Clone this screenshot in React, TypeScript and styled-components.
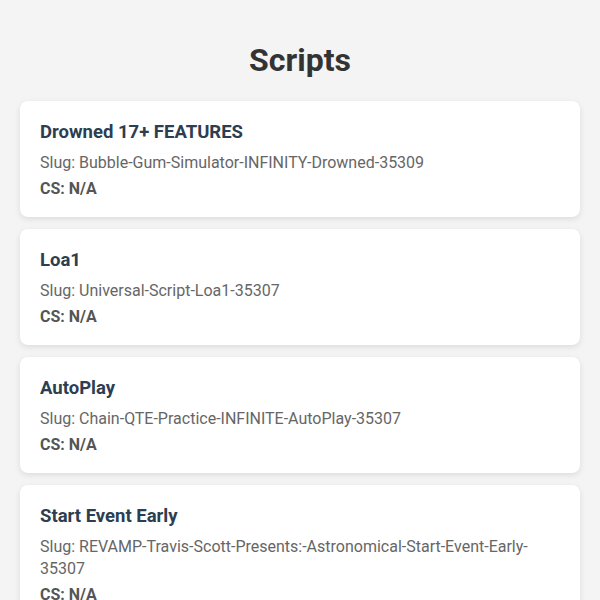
import React from 'react';
import styled, { createGlobalStyle } from 'styled-components';

const GlobalStyle = createGlobalStyle`
  body {
    margin: 0;
    background: #f4f4f4;
    font-family: Roboto, "Liberation Sans", Arial, sans-serif;
  }
`;

const Page = styled.div`
  padding: 20px;
`;

const Heading = styled.h1`
  text-align: center;
  color: #333;
  font-size: 32px;
  font-weight: 700;
  line-height: 38px;
  margin: 21px 0 22px;
`;

const List = styled.div`
  display: flex;
  flex-direction: column;
  gap: 12px;
`;

const Card = styled.div`
  background: white;
  border-radius: 8px;
  padding: 19px 20px 17px;
  box-shadow: 0 2px 6px rgba(0, 0, 0, 0.1);
`;

const CardTitle = styled.h3`
  margin: 0 0 8px;
  font-size: 18.5px;
  line-height: 24px;
  font-weight: 700;
  color: #2c3e50;
`;

const Meta = styled.p<{ $bold?: boolean }>`
  margin: 0 0 4px;
  font-size: 16px;
  line-height: 22px;
  color: ${p => (p.$bold ? '#555' : '#666')};
  font-weight: ${p => (p.$bold ? 700 : 400)};

  &:last-child {
    margin-bottom: 0;
  }
`;

const scripts = [
  { title: 'Drowned 17+ FEATURES', slug: 'Bubble-Gum-Simulator-INFINITY-Drowned-35309' },
  { title: 'Loa1', slug: 'Universal-Script-Loa1-35307' },
  { title: 'AutoPlay', slug: 'Chain-QTE-Practice-INFINITE-AutoPlay-35307' },
  { title: 'Start Event Early', slug: 'REVAMP-Travis-Scott-Presents:-Astronomical-Start-Event-Early-35307' },
];

const App: React.FC = () => (
  <Page>
    <GlobalStyle />
    <Heading>Scripts</Heading>
    <List>
      {scripts.map(s => (
        <Card key={s.slug}>
          <CardTitle>{s.title}</CardTitle>
          <Meta>Slug: {s.slug}</Meta>
          <Meta $bold>CS: N/A</Meta>
        </Card>
      ))}
    </List>
  </Page>
);

export default App;
